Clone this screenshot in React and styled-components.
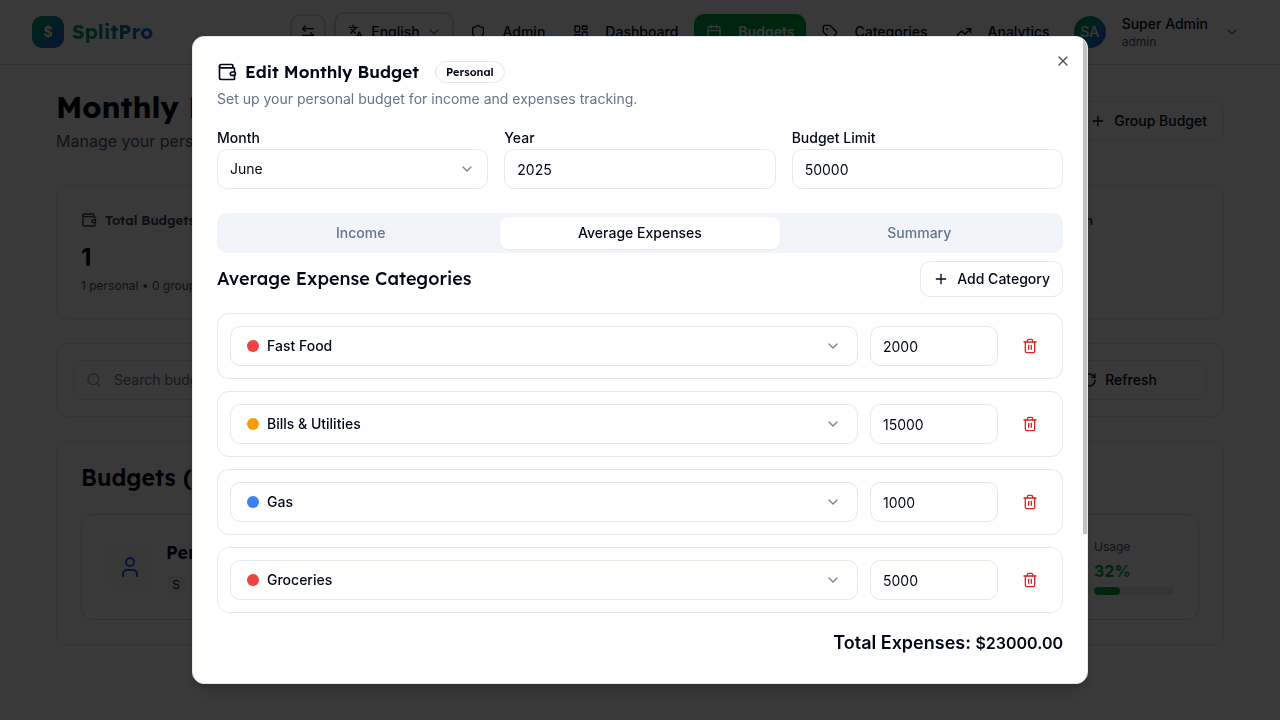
import React, { useState } from 'react';
import styled, { createGlobalStyle, css } from 'styled-components';
import {
	ArrowLeftRight,
	Calendar,
	ChevronDown,
	Languages,
	LayoutDashboard,
	Plus,
	RefreshCw,
	Search,
	Shield,
	Tag,
	Trash2,
	TrendingUp,
	User,
	Wallet,
	X,
} from 'lucide-react';

const navItems = [
	{ label: 'Admin', icon: Shield },
	{ label: 'Dashboard', icon: LayoutDashboard },
	{ label: 'Budgets', icon: Calendar, active: true },
	{ label: 'Categories', icon: Tag },
	{ label: 'Analytics', icon: TrendingUp },
];

const months = [
	'January',
	'February',
	'March',
	'April',
	'May',
	'June',
	'July',
	'August',
	'September',
	'October',
	'November',
	'December',
];

const categories = [
	{ name: 'Fast Food', color: '#ef4444' },
	{ name: 'Bills & Utilities', color: '#f59e0b' },
	{ name: 'Gas', color: '#3b82f6' },
	{ name: 'Groceries', color: '#ef4444' },
];

const startExpenses = [
	{ name: 'Fast Food', amount: 2000 },
	{ name: 'Bills & Utilities', amount: 15000 },
	{ name: 'Gas', amount: 1000 },
	{ name: 'Groceries', amount: 5000 },
];

const tabs = ['Income', 'Average Expenses', 'Summary'];

const Header = () => (
	<TopBar>
		<Logo href="#">
			<LogoMark>$</LogoMark>
			<LogoText>SplitPro</LogoText>
		</Logo>
		<Nav>
			<SwapButton aria-label="Switch direction">
				<ArrowLeftRight size={16} />
			</SwapButton>
			<LanguageButton>
				<Languages size={16} />
				<span>English</span>
				<FadedChevron size={16} />
			</LanguageButton>
			{navItems.map(({ label, icon: Icon, active }) => (
				<NavLink href="#" key={label} $active={active}>
					<Icon size={16} />
					{label}
				</NavLink>
			))}
			<UserButton>
				<Avatar>SA</Avatar>
				<UserInfo>
					<UserName>Super Admin</UserName>
					<UserRole>admin</UserRole>
				</UserInfo>
				<FadedChevron size={16} />
			</UserButton>
		</Nav>
	</TopBar>
);

const BudgetsPage = () => (
	<Main>
		<PageHead>
			<div>
				<PageTitle>Monthly Budgets</PageTitle>
				<PageText>Manage your personal and group budgets</PageText>
			</div>
			<Button>
				<Plus size={16} />
				Group Budget
			</Button>
		</PageHead>
		<Stats>
			<StatCard>
				<StatLabel>
					<Wallet size={16} />
					Total Budgets
				</StatLabel>
				<StatValue>1</StatValue>
				<SmallText>1 personal • 0 group</SmallText>
			</StatCard>
			<StatCard $wide>
				<StatLabel $end>Utilization</StatLabel>
			</StatCard>
		</Stats>
		<FilterCard>
			<SearchBox>
				<Search size={16} />
				<SearchInput aria-label="Search budgets" placeholder="Search budgets..." />
			</SearchBox>
			<Button $wide>
				<RefreshCw size={16} />
				Refresh
			</Button>
		</FilterCard>
		<ListCard>
			<ListTitle>Budgets (1)</ListTitle>
			<BudgetItem>
				<BudgetIcon>
					<User size={24} />
				</BudgetIcon>
				<BudgetInfo>
					<BudgetName>Personal Budget</BudgetName>
					<Initial>S</Initial>
				</BudgetInfo>
				<Usage>
					<SmallText>Usage</SmallText>
					<UsageValue>32%</UsageValue>
					<Track>
						<TrackFill style={{ width: '32%' }} />
					</Track>
				</Usage>
			</BudgetItem>
		</ListCard>
	</Main>
);

const ExpenseRow = ({ expense, onChange, onRemove }) => {
	const { color } = categories.find((item) => item.name === expense.name);
	return (
		<Row>
			<SelectBox>
				<Dot $color={color} />
				<Select
					$category
					aria-label="Category"
					value={expense.name}
					onChange={(e) => onChange({ ...expense, name: e.target.value })}
				>
					{categories.map((item) => (
						<option key={item.name}>{item.name}</option>
					))}
				</Select>
				<SelectChevron size={16} $category />
			</SelectBox>
			<AmountInput
				type="number"
				aria-label={`${expense.name} amount`}
				value={expense.amount}
				onChange={(e) => onChange({ ...expense, amount: e.target.value })}
			/>
			<RemoveButton aria-label={`Remove ${expense.name}`} onClick={onRemove}>
				<Trash2 size={16} />
			</RemoveButton>
		</Row>
	);
};

const BudgetDialog = () => {
	const [tab, setTab] = useState('Average Expenses');
	const [month, setMonth] = useState('June');
	const [expenses, setExpenses] = useState(startExpenses);
	const total = expenses.reduce((sum, item) => sum + Number(item.amount), 0);

	return (
		<Dialog role="dialog" aria-modal="true" aria-labelledby="dialog-title">
			<DialogBody>
				<DialogHead>
					<TitleRow>
						<Wallet size={20} />
						<DialogTitle id="dialog-title">Edit Monthly Budget</DialogTitle>
						<Badge>Personal</Badge>
					</TitleRow>
					<DialogText>
						Set up your personal budget for income and expenses tracking.
					</DialogText>
				</DialogHead>
				<Fields>
					<div>
						<Label htmlFor="month">Month</Label>
						<SelectBox>
							<Select
								id="month"
								value={month}
								onChange={(e) => setMonth(e.target.value)}
							>
								{months.map((item) => (
									<option key={item}>{item}</option>
								))}
							</Select>
							<SelectChevron size={16} />
						</SelectBox>
					</div>
					<div>
						<Label htmlFor="year">Year</Label>
						<Input id="year" type="number" defaultValue="2025" />
					</div>
					<div>
						<Label htmlFor="limit">Budget Limit</Label>
						<Input id="limit" type="number" defaultValue="50000" />
					</div>
				</Fields>
				<TabList role="tablist">
					{tabs.map((item) => (
						<Tab
							key={item}
							role="tab"
							aria-selected={item === tab}
							$active={item === tab}
							onClick={() => setTab(item)}
						>
							{item}
						</Tab>
					))}
				</TabList>
				<SectionHead>
					<SectionTitle>Average Expense Categories</SectionTitle>
					<Button
						$small
						onClick={() =>
							setExpenses([...expenses, { name: 'Groceries', amount: 0 }])
						}
					>
						<Plus size={16} />
						Add Category
					</Button>
				</SectionHead>
				<Rows>
					{expenses.map((expense, index) => (
						<ExpenseRow
							key={index}
							expense={expense}
							onChange={(next) =>
								setExpenses(expenses.map((item, i) => (i === index ? next : item)))
							}
							onRemove={() => setExpenses(expenses.filter((_, i) => i !== index))}
						/>
					))}
				</Rows>
				<Total>
					Total Expenses: <TotalAmount>${total.toFixed(2)}</TotalAmount>
				</Total>
			</DialogBody>
			<CloseButton aria-label="Close">
				<X size={16} />
			</CloseButton>
			<ScrollThumb />
		</Dialog>
	);
};

const App = () => (
	<>
		<GlobalStyle />
		<Header />
		<BudgetsPage />
		<Overlay>
			<BudgetDialog />
		</Overlay>
	</>
);

export default App;

const headingFont = "Lexend, Inter, 'Open Sans', sans-serif";

const GlobalStyle = createGlobalStyle`
	*, *::before, *::after {
		box-sizing: border-box;
	}

	body {
		margin: 0;
		overflow: hidden;
		background-color: #fff;
		color: #020817;
		font-family: Inter, 'Open Sans', sans-serif;
		font-size: 16px;
		line-height: 24px;
	}

	h1, h2, h3, p {
		margin: 0;
	}

	button, input, select {
		font: inherit;
		color: inherit;
	}

	button {
		cursor: pointer;
	}

	svg {
		flex-shrink: 0;
	}
`;

const control = css`
	height: 40px;
	border: 1px solid #e2e8f0;
	border-radius: 10px;
	background-color: #fff;
	font-size: 14px;
	line-height: 20px;
`;

const TopBar = styled.header`
	height: 65px;
	padding: 0 32px;
	display: flex;
	align-items: center;
	justify-content: space-between;
	border-bottom: 1px solid #d5d9e0;
`;

const Logo = styled.a`
	display: flex;
	align-items: center;
	gap: 8px;
	text-decoration: none;
`;

const LogoMark = styled.span`
	width: 32px;
	height: 32px;
	border-radius: 10px;
	display: flex;
	align-items: center;
	justify-content: center;
	background: linear-gradient(135deg, #00a63e, #155dfc);
	color: #fff;
	font-size: 14px;
	font-weight: 700;
`;

const LogoText = styled.span`
	font-family: ${headingFont};
	font-size: 20px;
	font-weight: 700;
	background: linear-gradient(90deg, #00a63e, #155dfc);
	background-clip: text;
	color: transparent;
`;

const Nav = styled.nav`
	display: flex;
	align-items: center;
	gap: 4px;
`;

const SwapButton = styled.button`
	width: 36px;
	height: 36px;
	margin-right: 4px;
	padding: 0;
	display: flex;
	align-items: center;
	justify-content: center;
	border: 2px solid #d5d9e0;
	border-radius: 10px;
	background: none;
`;

const LanguageButton = styled.button`
	width: 120px;
	height: 40px;
	padding: 0 10px 0 12px;
	display: flex;
	align-items: center;
	justify-content: space-between;
	border: 2px solid #d5d9e0;
	border-radius: 10px;
	background: none;
	font-size: 14px;
	font-weight: 500;
`;

const FadedChevron = styled(ChevronDown)`
	opacity: 0.6;
`;

const NavLink = styled.a`
	height: 36px;
	padding: 0 12px;
	display: flex;
	align-items: center;
	gap: 16px;
	border-radius: 10px;
	font-size: 14px;
	font-weight: ${({ $active }) => ($active ? 600 : 500)};
	text-decoration: none;
	background-color: ${({ $active }) => ($active ? '#00a63e' : 'transparent')};
	color: ${({ $active }) => ($active ? '#fff' : '#020817')};
`;

const UserButton = styled.button`
	padding: 0 8px;
	display: flex;
	align-items: center;
	gap: 16px;
	border: 0;
	background: none;
	text-align: left;
`;

const Avatar = styled.span`
	width: 32px;
	height: 32px;
	border-radius: 50%;
	display: flex;
	align-items: center;
	justify-content: center;
	background: linear-gradient(135deg, #00a63e, #155dfc);
	color: #fff;
	font-size: 14px;
	font-weight: 500;
`;

const UserInfo = styled.span`
	display: flex;
	flex-direction: column;
`;

const UserName = styled.span`
	font-size: 14px;
	line-height: 20px;
	font-weight: 500;
`;

const UserRole = styled.span`
	font-size: 12px;
	line-height: 16px;
	color: #475569;
`;

const Main = styled.main`
	padding: 24px 56px;
	display: flex;
	flex-direction: column;
	gap: 24px;
`;

const PageHead = styled.div`
	display: flex;
	align-items: center;
	justify-content: space-between;
	margin-bottom: 8px;
`;

const PageTitle = styled.h1`
	font-family: ${headingFont};
	font-size: 30px;
	line-height: 36px;
	font-weight: 700;
	margin-bottom: 4px;
`;

const PageText = styled.p`
	color: #475569;
`;

const Button = styled.button`
	${control}
	height: ${({ $small }) => ($small ? '36px' : '40px')};
	padding: 0 ${({ $small }) => ($small ? '12px' : '16px')};
	min-width: ${({ $wide }) => ($wide ? '176px' : '0')};
	display: flex;
	align-items: center;
	justify-content: center;
	gap: 8px;
	font-weight: 500;
`;

const Card = styled.section`
	border: 1px solid #e2e8f0;
	border-radius: 12px;
	background-color: #fff;
	box-shadow: 0 1px 2px rgba(0, 0, 0, 0.05);
`;

const Stats = styled.div`
	display: grid;
	grid-template-columns: repeat(4, 1fr);
	gap: 24px;
`;

const StatCard = styled(Card)`
	padding: 24px;
	grid-column: ${({ $wide }) => ($wide ? 'span 3' : 'auto')};
`;

const StatLabel = styled.div`
	display: flex;
	align-items: center;
	justify-content: ${({ $end }) => ($end ? 'flex-end' : 'flex-start')};
	gap: 8px;
	padding-right: ${({ $end }) => ($end ? '106px' : '0')};
	margin-bottom: 12px;
	font-family: ${headingFont};
	font-size: 13px;
	line-height: 20px;
	font-weight: 600;
	color: #334155;
`;

const StatValue = styled.div`
	margin-bottom: 4px;
	font-size: 24px;
	line-height: 32px;
	font-weight: 700;
`;

const SmallText = styled.p`
	font-size: 12px;
	line-height: 16px;
	color: #475569;
`;

const FilterCard = styled(Card)`
	padding: 16px;
	display: flex;
	gap: 16px;
`;

const SearchBox = styled.div`
	${control}
	flex: 1;
	padding: 0 12px;
	display: flex;
	align-items: center;
	gap: 12px;
	color: #94a3b8;
`;

const SearchInput = styled.input`
	flex: 1;
	padding: 0;
	border: 0;
	outline: 0;
	background: none;

	&::placeholder {
		color: #64748b;
	}
`;

const ListCard = styled(Card)`
	padding: 24px;
`;

const ListTitle = styled.h2`
	margin-bottom: 24px;
	font-family: ${headingFont};
	font-size: 23px;
	line-height: 24px;
	font-weight: 600;
`;

const BudgetItem = styled.article`
	padding: 24px;
	display: flex;
	align-items: center;
	gap: 12px;
	border: 1px solid #d5d9e0;
	border-radius: 12px;
`;

const BudgetIcon = styled.div`
	width: 48px;
	height: 48px;
	display: flex;
	align-items: center;
	justify-content: center;
	border-radius: 12px;
	background-color: #f8fafc;
	color: #155dfc;
`;

const BudgetInfo = styled.div`
	flex: 1;
`;

const BudgetName = styled.h3`
	margin-bottom: 8px;
	font-family: ${headingFont};
	font-size: 18px;
	line-height: 28px;
	font-weight: 600;
`;

const Initial = styled.span`
	width: 20px;
	height: 20px;
	display: flex;
	align-items: center;
	justify-content: center;
	border-radius: 50%;
	background-color: #f1f5f9;
	font-size: 12px;
`;

const Usage = styled.div`
	width: 80px;
	display: flex;
	flex-direction: column;
	gap: 4px;
`;

const UsageValue = styled.div`
	font-weight: 700;
	color: #00a63e;
`;

const Track = styled.div`
	height: 8px;
	overflow: hidden;
	border-radius: 4px;
	background-color: #e2e8f0;
`;

const TrackFill = styled.div`
	height: 100%;
	border-radius: 4px;
	background-color: #00a63e;
`;

const Overlay = styled.div`
	position: fixed;
	inset: 0;
	display: flex;
	align-items: center;
	justify-content: center;
	background-color: rgba(0, 0, 0, 0.775);
`;

const Dialog = styled.div`
	position: relative;
	width: 100%;
	max-width: 896px;
	height: 90vh;
	overflow: hidden;
	border: 1px solid #e2e8f0;
	border-radius: 12px;
	background-color: #fff;
	box-shadow: 0 10px 15px rgba(0, 0, 0, 0.1), 0 4px 6px rgba(0, 0, 0, 0.1);
`;

const DialogBody = styled.div`
	height: 100%;
	padding: 24px;
	overflow-y: auto;
	scrollbar-width: none;
`;

const ScrollThumb = styled.div`
	position: absolute;
	top: 0;
	right: 0;
	width: 4px;
	height: 77%;
	background-color: #c1c1c1;
`;

const CloseButton = styled.button`
	position: absolute;
	top: 16px;
	right: 16px;
	padding: 0;
	display: flex;
	border: 0;
	background: none;
	opacity: 0.7;
`;

const DialogHead = styled.div`
	display: flex;
	flex-direction: column;
	gap: 6px;
	margin-bottom: 16px;
`;

const TitleRow = styled.div`
	display: flex;
	align-items: center;
	gap: 8px;
`;

const DialogTitle = styled.h2`
	margin-right: 8px;
	font-family: ${headingFont};
	font-size: 17px;
	line-height: 22px;
	font-weight: 600;
`;

const Badge = styled.span`
	height: 22px;
	padding: 0 10px;
	border: 1px solid #e2e8f0;
	border-radius: 11px;
	font-family: ${headingFont};
	font-size: 11px;
	line-height: 20px;
	font-weight: 600;
`;

const DialogText = styled.p`
	font-size: 14px;
	line-height: 20px;
	color: #64748b;
`;

const Fields = styled.div`
	display: grid;
	grid-template-columns: repeat(3, 1fr);
	gap: 16px;
	margin-bottom: 24px;
`;

const Label = styled.label`
	display: block;
	padding-top: 2px;
	font-size: 14px;
	line-height: 22px;
	font-weight: 500;
`;

const Input = styled.input`
	${control}
	width: 100%;
	padding: 0 12px;
	appearance: textfield;
`;

const AmountInput = styled(Input)`
	width: 128px;
`;

const SelectBox = styled.div`
	position: relative;
	flex: 1;
`;

const Select = styled.select`
	${control}
	display: block;
	width: 100%;
	padding: 0 36px 0 ${({ $category }) => ($category ? '36px' : '12px')};
	font-weight: ${({ $category }) => ($category ? 500 : 400)};
	appearance: none;
`;

const SelectChevron = styled(({ $category, ...props }) => (
	<ChevronDown {...props} />
))`
	position: absolute;
	top: 12px;
	right: ${({ $category }) => ($category ? '17px' : '13px')};
	opacity: 0.5;
	pointer-events: none;
`;

const Dot = styled.span`
	position: absolute;
	top: 14px;
	left: 17px;
	width: 12px;
	height: 12px;
	border-radius: 50%;
	background-color: ${({ $color }) => $color};
`;

const TabList = styled.div`
	height: 40px;
	margin-bottom: 8px;
	padding: 4px;
	display: grid;
	grid-template-columns: repeat(3, 1fr);
	border-radius: 10px;
	background-color: #f1f5f9;
`;

const Tab = styled.button`
	padding: 0 12px;
	border: 0;
	border-radius: 8px;
	font-size: 14px;
	line-height: 20px;
	font-weight: 500;
	background-color: ${({ $active }) => ($active ? '#fff' : 'transparent')};
	color: ${({ $active }) => ($active ? '#020817' : '#64748b')};
	box-shadow: ${({ $active }) =>
		$active ? '0 1px 2px rgba(0, 0, 0, 0.05)' : 'none'};
`;

const SectionHead = styled.div`
	display: flex;
	align-items: center;
	justify-content: space-between;
	margin-bottom: 16px;
`;

const SectionTitle = styled.h3`
	font-family: ${headingFont};
	font-size: 18px;
	line-height: 28px;
	font-weight: 500;
`;

const Rows = styled.div`
	display: flex;
	flex-direction: column;
	gap: 12px;
`;

const Row = styled.div`
	padding: 12px;
	display: flex;
	align-items: center;
	gap: 12px;
	border: 1px solid #e2e8f0;
	border-radius: 12px;
`;

const RemoveButton = styled.button`
	width: 40px;
	height: 40px;
	padding: 0;
	display: flex;
	align-items: center;
	justify-content: center;
	border: 0;
	background: none;
	color: #dc2626;
`;

const Total = styled.div`
	margin-top: 16px;
	font-size: 18px;
	line-height: 28px;
	font-weight: 600;
	text-align: right;
`;

const TotalAmount = styled.span`
	font-size: 16px;
`;
